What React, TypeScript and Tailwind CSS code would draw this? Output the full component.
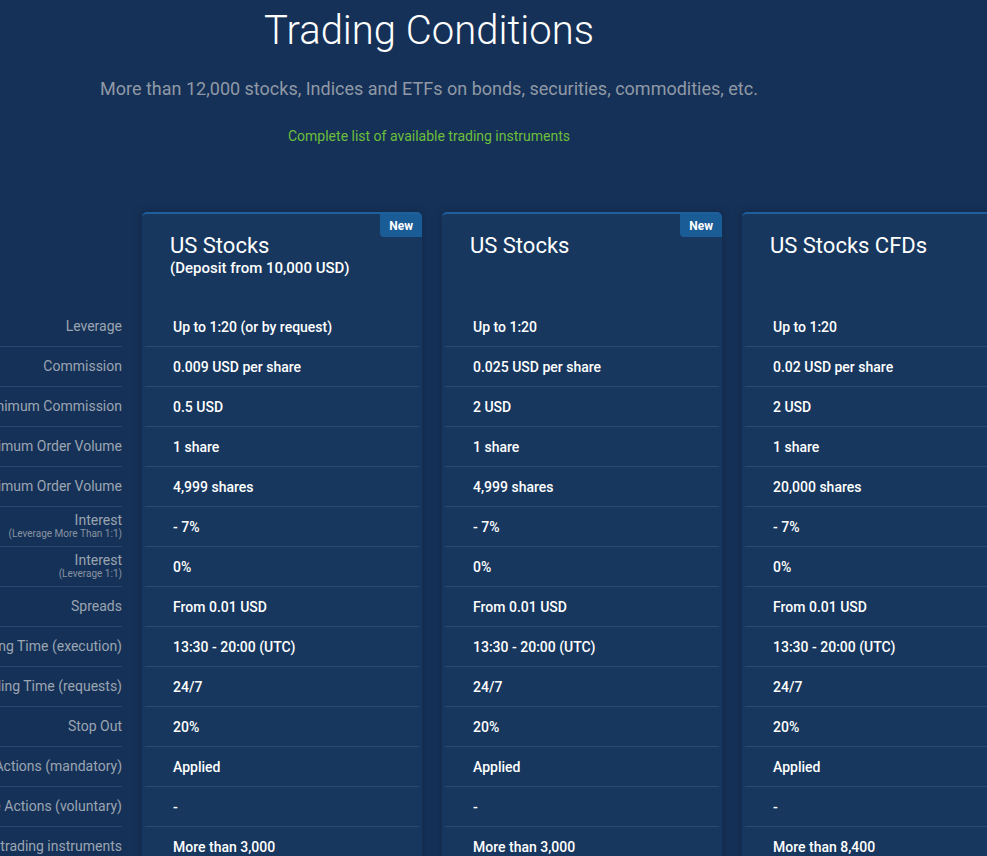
import React from 'react'

type Row = { label: string; sub?: string }

const rows: Row[] = [
  { label: 'Leverage' },
  { label: 'Commission' },
  { label: 'Minimum Commission' },
  { label: 'Minimum Order Volume' },
  { label: 'Maximum Order Volume' },
  { label: 'Interest', sub: '(Leverage More Than 1:1)' },
  { label: 'Interest', sub: '(Leverage 1:1)' },
  { label: 'Spreads' },
  { label: 'Trading Time (execution)' },
  { label: 'Trading Time (requests)' },
  { label: 'Stop Out' },
  { label: 'Corporate Actions (mandatory)' },
  { label: 'Corporate Actions (voluntary)' },
  { label: 'Number of trading instruments' },
]

const cards = [
  {
    title: 'US Stocks',
    sub: '(Deposit from 10,000 USD)',
    isNew: true,
    values: ['Up to 1:20 (or by request)', '0.009 USD per share', '0.5 USD', '1 share', '4,999 shares', '- 7%', '0%', 'From 0.01 USD', '13:30 - 20:00 (UTC)', '24/7', '20%', 'Applied', '-', 'More than 3,000'],
  },
  {
    title: 'US Stocks',
    isNew: true,
    values: ['Up to 1:20', '0.025 USD per share', '2 USD', '1 share', '4,999 shares', '- 7%', '0%', 'From 0.01 USD', '13:30 - 20:00 (UTC)', '24/7', '20%', 'Applied', '-', 'More than 3,000'],
  },
  {
    title: 'US Stocks CFDs',
    isNew: false,
    values: ['Up to 1:20', '0.02 USD per share', '2 USD', '1 share', '20,000 shares', '- 7%', '0%', 'From 0.01 USD', '13:30 - 20:00 (UTC)', '24/7', '20%', 'Applied', '-', 'More than 8,400'],
  },
]

export default function App() {
  return (
    <div className="min-h-screen w-full overflow-hidden bg-[#163157] font-['Roboto',sans-serif]">
      {/* Heading */}
      <div className="w-[858px] text-center pt-[7px]">
        <h1 className="text-[40px] leading-[48px] font-light text-white">Trading Conditions</h1>
        <p className="mt-[22px] text-[18px] leading-[24px] text-[#8f99a6]">
          More than 12,000 stocks, Indices and ETFs on bonds, securities, commodities, etc.
        </p>
        <a className="block mt-[26px] text-[14px] leading-[18px] text-[#6cbf3b]">
          Complete list of available trading instruments
        </a>
      </div>

      {/* Table */}
      <div className="flex mt-[67px]">
        <div className="w-[262px] ml-[-140px] shrink-0 pt-[95px]">
          {rows.map((r, i) => (
            <div key={i} className="h-[40px] pb-[2px] border-b border-[#2b4770] flex flex-col items-end justify-center text-right whitespace-nowrap">
              <span className="text-[14px] leading-[16px] text-[#9aa5b2]">{r.label}</span>
              {r.sub && <span className="text-[10px] leading-[12px] text-[#8793a1]">{r.sub}</span>}
            </div>
          ))}
        </div>

        {cards.map((c, ci) => (
          <div key={ci} className="w-[280px] shrink-0 ml-[20px] relative bg-[#17375e] border-t-2 border-[#1e5f9e] rounded-t-[5px] shadow-[0_0_10px_rgba(10,25,50,0.35)]">
            {c.isNew && (
              <div className="absolute top-0 right-0 h-[23px] px-[9px] flex items-center bg-[#1a5c96] rounded-bl-[4px] rounded-tr-[4px] text-white text-[12px] font-bold">
                New
              </div>
            )}
            <div className="h-[93px] px-[28px] pt-[19px]">
              <div className="text-[22px] leading-[26px] text-white">{c.title}</div>
              {c.sub && <div className="text-[15px] leading-[18px] font-medium text-white">{c.sub}</div>}
            </div>
            {c.values.map((v, vi) => (
              <div key={vi} className="mx-[3px] h-[40px] pt-[1px] px-[28px] flex items-center border-b border-[#2b4a72] text-[14px] font-medium text-white whitespace-nowrap">
                {v}
              </div>
            ))}
          </div>
        ))}
      </div>
    </div>
  )
}
